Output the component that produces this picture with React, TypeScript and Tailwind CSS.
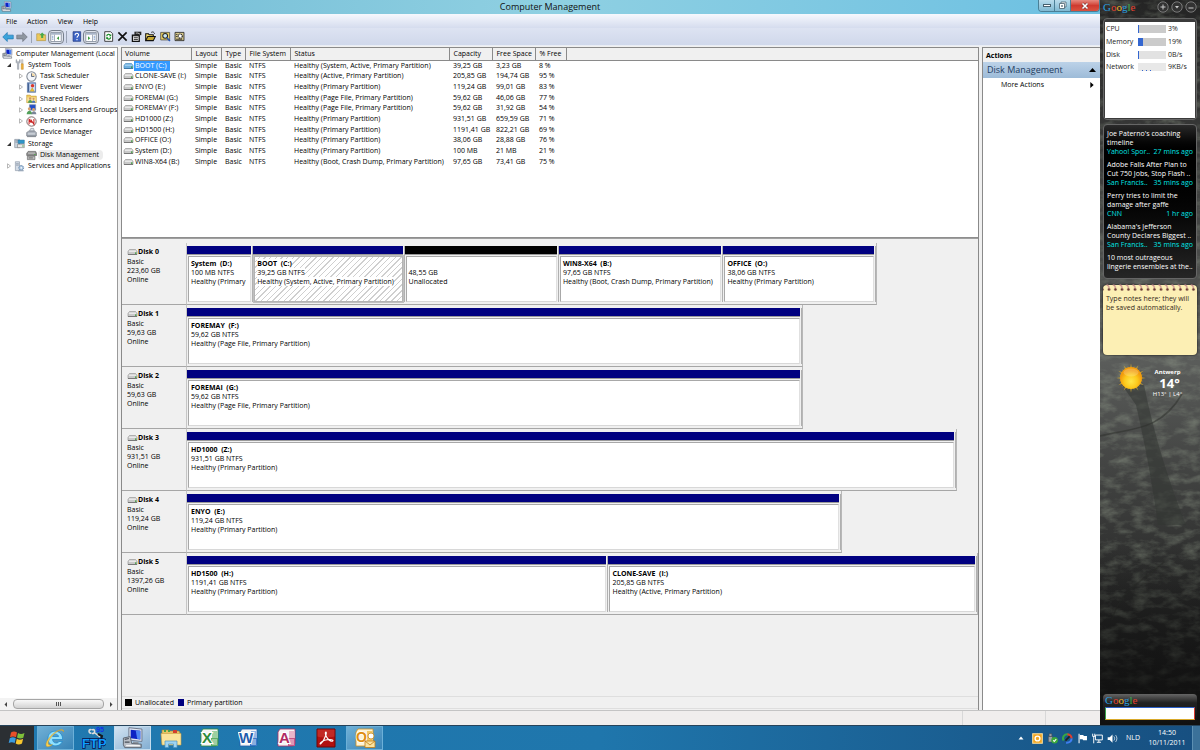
import { useState } from "react";
import type { ReactNode } from "react";

interface Volume {
  name: string;
  fs: string;
  status: string;
  capacity: string;
  free: string;
  pct: string;
}

interface Partition {
  title?: string;
  size: string;
  status: string;
  weight: number;
  unallocated?: boolean;
  selected?: boolean;
}

interface Disk {
  name: string;
  size: string;
  width: number;
  parts: Partition[];
}

const volumes: Volume[] = [
  { name: "BOOT (C:)", fs: "NTFS", status: "Healthy (System, Active, Primary Partition)", capacity: "39,25 GB", free: "3,23 GB", pct: "8 %" },
  { name: "CLONE-SAVE (I:)", fs: "NTFS", status: "Healthy (Active, Primary Partition)", capacity: "205,85 GB", free: "194,74 GB", pct: "95 %" },
  { name: "ENYO (E:)", fs: "NTFS", status: "Healthy (Primary Partition)", capacity: "119,24 GB", free: "99,01 GB", pct: "83 %" },
  { name: "FOREMAI (G:)", fs: "NTFS", status: "Healthy (Page File, Primary Partition)", capacity: "59,62 GB", free: "46,06 GB", pct: "77 %" },
  { name: "FOREMAY (F:)", fs: "NTFS", status: "Healthy (Page File, Primary Partition)", capacity: "59,62 GB", free: "31,92 GB", pct: "54 %" },
  { name: "HD1000 (Z:)", fs: "NTFS", status: "Healthy (Primary Partition)", capacity: "931,51 GB", free: "659,59 GB", pct: "71 %" },
  { name: "HD1500 (H:)", fs: "NTFS", status: "Healthy (Primary Partition)", capacity: "1191,41 GB", free: "822,21 GB", pct: "69 %" },
  { name: "OFFICE (O:)", fs: "NTFS", status: "Healthy (Primary Partition)", capacity: "38,06 GB", free: "28,88 GB", pct: "76 %" },
  { name: "System (D:)", fs: "NTFS", status: "Healthy (Primary Partition)", capacity: "100 MB", free: "21 MB", pct: "21 %" },
  { name: "WIN8-X64 (B:)", fs: "NTFS", status: "Healthy (Boot, Crash Dump, Primary Partition)", capacity: "97,65 GB", free: "73,41 GB", pct: "75 %" },
];

const disks: Disk[] = [
  {
    name: "Disk 0",
    size: "223,60 GB",
    width: 87.2,
    parts: [
      { title: "System  (D:)", size: "100 MB NTFS", status: "Healthy (Primary", weight: 65 },
      { title: "BOOT  (C:)", size: "39,25 GB NTFS", status: "Healthy (System, Active, Primary Partition)", weight: 150, selected: true },
      { size: "48,55 GB", status: "Unallocated", weight: 153, unallocated: true },
      { title: "WIN8-X64  (B:)", size: "97,65 GB NTFS", status: "Healthy (Boot, Crash Dump, Primary Partition)", weight: 163 },
      { title: "OFFICE  (O:)", size: "38,06 GB NTFS", status: "Healthy (Primary Partition)", weight: 151 },
    ],
  },
  { name: "Disk 1", size: "59,63 GB", width: 77.9, parts: [{ title: "FOREMAY  (F:)", size: "59,62 GB NTFS", status: "Healthy (Page File, Primary Partition)", weight: 1 }] },
  { name: "Disk 2", size: "59,63 GB", width: 77.9, parts: [{ title: "FOREMAI  (G:)", size: "59,62 GB NTFS", status: "Healthy (Page File, Primary Partition)", weight: 1 }] },
  { name: "Disk 3", size: "931,51 GB", width: 97.3, parts: [{ title: "HD1000  (Z:)", size: "931,51 GB NTFS", status: "Healthy (Primary Partition)", weight: 1 }] },
  { name: "Disk 4", size: "119,24 GB", width: 82.8, parts: [{ title: "ENYO  (E:)", size: "119,24 GB NTFS", status: "Healthy (Primary Partition)", weight: 1 }] },
  {
    name: "Disk 5",
    size: "1397,26 GB",
    width: 100,
    parts: [
      { title: "HD1500  (H:)", size: "1191,41 GB NTFS", status: "Healthy (Primary Partition)", weight: 421 },
      { title: "CLONE-SAVE  (I:)", size: "205,85 GB NTFS", status: "Healthy (Active, Primary Partition)", weight: 368 },
    ],
  },
];

const news = [
  { text: ["Joe Paterno's coaching", "timeline"], source: "Yahoo! Spor..", age: "27 mins ago" },
  { text: ["Adobe Falls After Plan to", "Cut 750 Jobs, Stop Flash .."], source: "San Francis..", age: "35 mins ago" },
  { text: ["Perry tries to limit the", "damage after gaffe"], source: "CNN", age: "1 hr ago" },
  { text: ["Alabama's Jefferson", "County Declares Biggest .."], source: "San Francis..", age: "35 mins ago" },
  { text: ["10 most outrageous", "lingerie ensembles at the.."], source: "", age: "" },
];

/* ---------- icons ---------- */

const Svg = ({ size = 11, box = 16, children }: { size?: number; box?: number; children: ReactNode }) => (
  <svg width={size} height={size} viewBox={`0 0 ${box} ${box}`} fill="none" className="shrink-0" aria-hidden="true">
    {children}
  </svg>
);

const ComputerIcon = ({ size = 11 }: { size?: number }) => (
  <Svg size={size}>
    <path d="M5 .5l9.500 1v9L5 9.500z" fill="#dfe5ef" stroke="#6c778b" strokeWidth=".7" />
    <path d="M6.300 2l7 .8v6.200l-7-.8z" fill="#0d23c4" />
    <path d="M10 2.500l3.300.3v6.100L11 8.600z" fill="#4f86f2" />
    <path d="M8 10.500l4 .4v1.500H8z" fill="#8d949e" />
    <path d="M1 8l5-1 1 5 7 .5V15H2l-1-2z" fill="#b9bec6" stroke="#5d6570" strokeWidth=".7" />
    <path d="M2 9l3-.6M2 11h3.500" stroke="#49505b" strokeWidth=".8" />
    <path d="M3 13.500h10" stroke="#f4f4f4" />
  </Svg>
);

const DriveIcon = ({ selected = false }: { selected?: boolean }) => (
  <svg width="11" height="8" viewBox="0 0 11 8" className="shrink-0" aria-hidden="true">
    <path d="M2.500 1.500h6L10 3.500v3H1v-3z" fill={selected ? "#6fb0de" : "#c9c9c9"} stroke={selected ? "#4d8fc2" : "#999"} strokeWidth=".7" />
    <path d="M2 3.200h7" stroke={selected ? "#a9d5f3" : "#f1f1f1"} strokeWidth="1.200" />
    <path d="M1 6.500h9" stroke={selected ? "#336e9e" : "#6a6a6a"} strokeWidth=".8" />
    <path d="M8 4.500h1.500v1.300H8z" fill="#2f9a2c" />
  </svg>
);

const ToolsIcon = () => (
  <Svg>
    <path d="M3 1v4l2 2v8h2V7l2-2V1H8v3H4V1z" fill="#b6bcc4" stroke="#7a828c" strokeWidth=".6" />
    <path d="M11 1h2v6h-2z" fill="#d7d7d7" stroke="#888" strokeWidth=".5" />
    <path d="M10.500 7h3v8h-3z" fill="#f0b23c" stroke="#b37a19" strokeWidth=".6" />
  </Svg>
);
const ClockIcon = () => (
  <Svg>
    <circle cx="8" cy="8" r="6.800" fill="#f3f6fb" stroke="#7f8792" strokeWidth="1.500" />
    <path d="M8 8V2.800A5.200 5.200 0 0 1 13.200 8z" fill="#f1d9a8" />
    <path d="M8 3.500V8h4" stroke="#4a5a78" strokeWidth="1.200" />
  </Svg>
);
const EventIcon = () => (
  <Svg>
    <path d="M2 1h12v14H2z" fill="#7696c8" stroke="#405f93" strokeWidth=".8" />
    <path d="M5 2.500h8v11H5z" fill="#d5e0f3" />
    <circle cx="9.500" cy="5.500" r="2.500" fill="#d9382d" />
    <path d="M6 13.500l3-5 3 5z" fill="#f4c42e" stroke="#a87d0c" strokeWidth=".5" />
    <path d="M3.500 2v12" stroke="#294474" />
  </Svg>
);
const SharedIcon = () => (
  <Svg>
    <path d="M1 3h5l1.500 1.500H15V14H1z" fill="#f1cc61" stroke="#b58d27" strokeWidth=".7" />
    <path d="M2 6.500h12V13H2z" fill="#f9e39b" />
    <circle cx="6" cy="8" r="1.800" fill="#d09565" />
    <path d="M3 14c0-5 6-5 6 0z" fill="#4f9b52" />
    <circle cx="11" cy="8.500" r="1.600" fill="#d09565" />
    <path d="M8.500 14c0-4 5-4 5 0z" fill="#4673bd" />
  </Svg>
);
const UsersIcon = () => (
  <Svg>
    <path d="M5 1h9v8H5z" fill="#234fc9" stroke="#8290a8" />
    <circle cx="5" cy="7" r="2.300" fill="#d8a06e" />
    <path d="M1 15c0-7 8-7 8 0z" fill="#52a05a" />
    <circle cx="11" cy="8" r="2.100" fill="#d8a06e" />
    <path d="M8 15c0-6 7-6 7 0z" fill="#7a8597" />
  </Svg>
);
const PerfIcon = () => (
  <Svg>
    <circle cx="8" cy="8" r="6.800" fill="#fff" stroke="#6f5a5a" strokeWidth="1.300" />
    <path d="M4.500 12V4.500l3 5.500V6l4 6V4.500" stroke="#c81f1f" strokeWidth="1.500" />
  </Svg>
);
const DeviceIcon = () => (
  <Svg>
    <path d="M5 6l2-4h4l1 4z" fill="#dfe4ea" stroke="#77808c" strokeWidth=".8" />
    <path d="M1 8l3-2h9l2 2v5H1z" fill="#aeb5bf" stroke="#5b636e" strokeWidth=".8" />
    <path d="M3 10h10" stroke="#eef0f3" />
    <path d="M1.500 14h13" stroke="#555c66" />
  </Svg>
);
const StorageIcon = () => (
  <Svg>
    <path d="M1 2h7v12H1z" fill="#cdd6df" stroke="#6e7a88" strokeWidth=".8" />
    <path d="M2 4h5M2 6h5" stroke="#6f7e90" />
    <path d="M6 3h9v5H6z" fill="#2f96c9" stroke="#1d6b96" strokeWidth=".7" />
    <path d="M5 9h10v5H5z" fill="#e7e7e7" stroke="#727272" strokeWidth=".8" />
    <path d="M12 11.500h2" stroke="#36a436" strokeWidth="1.500" />
  </Svg>
);
const DiskMgmtIcon = () => (
  <Svg>
    <path d="M3 2h11l1.500 3v3H1V5z" fill="#8d8d8d" stroke="#4d4d4d" strokeWidth=".8" />
    <path d="M3 4.500h10" stroke="#e9e9e9" />
    <path d="M2 9h11v5H2z" fill="#b9b9b9" stroke="#555" strokeWidth=".8" />
    <path d="M4 11.500h6" stroke="#505050" />
    <path d="M12 6.500h2" stroke="#3faa3a" strokeWidth="1.200" />
  </Svg>
);
const ServicesIcon = () => (
  <Svg>
    <path d="M2 1h6v13H2z" fill="#d4dce6" stroke="#7d8a9a" strokeWidth=".8" />
    <path d="M3 4h4M3 6h4" stroke="#7d8a9a" />
    <circle cx="10.500" cy="10" r="3.500" fill="#a9c3de" stroke="#5e7fa4" strokeWidth="1.400" strokeDasharray="1.500 1" />
    <circle cx="10.500" cy="10" r="1.200" fill="#fff" />
    <path d="M6 13h8v2H6z" fill="#9aa9ba" />
  </Svg>
);

/* ---------- console tree ---------- */

interface TreeNode {
  label: string;
  level: 0 | 1 | 2;
  icon: ReactNode;
  arrow?: "open" | "closed";
}

const tree: TreeNode[] = [
  { label: "Computer Management (Local", level: 0, icon: <ComputerIcon /> },
  { label: "System Tools", level: 1, icon: <ToolsIcon />, arrow: "open" },
  { label: "Task Scheduler", level: 2, icon: <ClockIcon />, arrow: "closed" },
  { label: "Event Viewer", level: 2, icon: <EventIcon />, arrow: "closed" },
  { label: "Shared Folders", level: 2, icon: <SharedIcon />, arrow: "closed" },
  { label: "Local Users and Groups", level: 2, icon: <UsersIcon />, arrow: "closed" },
  { label: "Performance", level: 2, icon: <PerfIcon />, arrow: "closed" },
  { label: "Device Manager", level: 2, icon: <DeviceIcon /> },
  { label: "Storage", level: 1, icon: <StorageIcon />, arrow: "open" },
  { label: "Disk Management", level: 2, icon: <DiskMgmtIcon /> },
  { label: "Services and Applications", level: 1, icon: <ServicesIcon />, arrow: "closed" },
];

const indents = ["pl-[2px]", "pl-1", "pl-4"];

const Tree = () => {
  const [selected, setSelected] = useState("Disk Management");

  return (
    <nav aria-label="Console tree" className="flex h-[124px] flex-col">
      {tree.map((node) => (
        <button
          key={node.label}
          onClick={() => setSelected(node.label)}
          className={`flex w-full flex-1 items-center overflow-hidden text-left ${indents[node.level]}`}
        >
          {node.level > 0 && (
            <span className="flex w-[10px] shrink-0 justify-start pl-[2px]">
              {node.arrow === "open" && (
                <svg width="6" height="6" viewBox="0 0 6 6" aria-hidden="true">
                  <path d="M5 1v4H1z" fill="#333" />
                </svg>
              )}
              {node.arrow === "closed" && (
                <svg width="6" height="6" viewBox="0 0 6 6" aria-hidden="true">
                  <path d="M1.500.8L4.500 3 1.500 5.200z" fill="#fff" stroke="#999" strokeWidth=".7" />
                </svg>
              )}
            </span>
          )}
          {node.icon}
          <span
            className={`ml-px whitespace-nowrap rounded-sm pl-[2px] ${
              selected === node.label && node.level > 0 ? "bg-[#ececec] pr-1" : ""
            }`}
          >
            {node.label}
          </span>
        </button>
      ))}
    </nav>
  );
};

/* ---------- window chrome ---------- */

const TitleBar = () => (
  <header className="flex h-[14px] items-start bg-linear-to-r from-[#6fb9d3] via-[#8fd0e2] to-[#6cc0e2]">
    <div className="flex w-[62px] pt-px pl-px">
      <ComputerIcon />
    </div>
    <h1 className="flex-1 text-center text-[9px] leading-[14px] text-[#111]">Computer Management</h1>
    <div className="flex h-3 overflow-hidden rounded-b-sm border border-t-0 border-[#4a7f96]">
      <button aria-label="Minimize" className="flex w-4 items-center justify-center border-r border-[#4a7f96] bg-linear-to-b from-[#b9dcec] to-[#7fb9d2]">
        <span className="h-[3px] w-2 border border-[#46606e] bg-white" />
      </button>
      <button aria-label="Restore" className="flex w-4 items-center justify-center border-r border-[#4a7f96] bg-linear-to-b from-[#b9dcec] to-[#7fb9d2]">
        <Svg size={9} box={9}>
          <path d="M3 1h5v5H3z" fill="#fff" stroke="#46606e" strokeWidth=".8" />
          <path d="M1.500 2.500h5v5h-5z" fill="#fff" stroke="#46606e" strokeWidth=".8" />
          <path d="M3.200 4.200h1.600v1.600H3.200z" fill="#46606e" />
        </Svg>
      </button>
      <button aria-label="Close" className="flex w-7 items-center justify-center bg-linear-to-b from-[#e58a80] via-[#cf3a30] to-[#d9523f]">
        <Svg size={8} box={8}>
          <path d="M1.500 1.500l5 5M6.500 1.500l-5 5" stroke="#703030" strokeWidth="2.600" />
          <path d="M1.500 1.500l5 5M6.500 1.500l-5 5" stroke="#fff" strokeWidth="1.600" />
        </Svg>
      </button>
    </div>
  </header>
);

const MenuBar = () => (
  <div className="flex h-[14px] items-center bg-linear-to-b from-[#f6f8fd] to-[#d5dcee] pt-px pl-px">
    {["File", "Action", "View", "Help"].map((item) => (
      <button key={item} className="px-[5px]">
        {item}
      </button>
    ))}
  </div>
);

const Separator = () => <span className="h-3 w-px bg-[#9aa3b5]" />;

const ToolButton = ({ label, pressed, children }: { label: string; pressed?: boolean; children: ReactNode }) => (
  <button
    aria-label={label}
    className={`flex h-[14px] items-center justify-center ${
      pressed ? "w-4 rounded-sm border border-[#777f8c] bg-[#dfe3ec]" : "w-[14px]"
    }`}
  >
    {children}
  </button>
);

const PaneIcon = ({ flip = false }: { flip?: boolean }) => (
  <Svg size={12}>
    <path d="M1 2h14v12H1z" fill="#fff" stroke="#7a8391" />
    <path d="M1.500 2.500h13v2.500h-13z" fill="#a9b5c8" />
    <path d={flip ? "M10 5v9" : "M6 5v9"} stroke="#8a94a5" />
    <path d={flip ? "M4 7l3 2.500L4 12z" : "M12 7L9 9.500l3 2.500z"} fill="#3b9a3f" />
    <path d={flip ? "M11.500 7h2M11.500 9h2M11.500 11h2" : "M2.500 7h2M2.500 9h2M2.500 11h2"} stroke="#5b82bd" />
  </Svg>
);

const Toolbar = () => (
  <div className="flex h-[18px] items-center border-b border-[#e9edf5] bg-linear-to-b from-[#dde3f2] to-[#d0d8eb] pl-px">
    <ToolButton label="Back">
      <Svg size={12}>
        <path d="M1 8l6-6v3.500h8v5H7V14z" fill="#3ba4dc" stroke="#1f76b0" strokeWidth=".9" />
      </Svg>
    </ToolButton>
    <ToolButton label="Forward">
      <Svg size={12}>
        <path d="M15 8L9 2v3.500H1v5h8V14z" fill="#8e96a0" stroke="#6b737d" strokeWidth=".9" />
      </Svg>
    </ToolButton>
    <span className="flex w-[5px] justify-center"><Separator /></span>
    <ToolButton label="Up one level">
      <Svg>
        <path d="M1 4h5l1.500 1.500H14V14H1z" fill="#ecc85c" stroke="#a98b39" strokeWidth=".8" />
        <path d="M9 2l4 4h-2.500v4h-3V6H5z" fill="#47a94a" />
      </Svg>
    </ToolButton>
    <ToolButton label="Show or hide console tree" pressed><PaneIcon /></ToolButton>
    <span className="flex w-[5px] justify-center"><Separator /></span>
    <ToolButton label="Help">
      <Svg>
        <path d="M3 1h11v14H3z" fill="#3c63c4" stroke="#20377f" />
        <path d="M6 6c0-4 5.500-3 5-.2-.3 1.600-2.300 1.700-2.300 4M8.700 11.500v1.800" stroke="#fff" strokeWidth="1.600" />
      </Svg>
    </ToolButton>
    <ToolButton label="Show or hide action pane" pressed><PaneIcon flip /></ToolButton>
    <span className="w-[2px]" />
    <ToolButton label="Refresh">
      <Svg>
        <path d="M2.500 1H11l3 3v11H2.500z" fill="#fff" stroke="#222" strokeWidth="1.200" />
        <path d="M5.500 7.500c0-3.500 4.500-3.500 5-1M11 9c0 3.500-4.500 3.500-5 1" stroke="#148a25" strokeWidth="1.800" />
        <path d="M8.500 7.500H12V4.500zM8 9H4.500v3z" fill="#148a25" />
      </Svg>
    </ToolButton>
    <ToolButton label="Delete">
      <Svg>
        <path d="M2 2l12 12M14 2L2 14" stroke="#111" strokeWidth="2.400" />
      </Svg>
    </ToolButton>
    <ToolButton label="Properties">
      <Svg>
        <path d="M2 6h10v9H2z" fill="#eee" stroke="#111" strokeWidth="1.800" />
        <path d="M2 7h10M4 9.800h6M4 12.300h6" stroke="#111" strokeWidth="1.200" />
        <path d="M5 1h10v5H5z" fill="#222" />
        <path d="M7 3h3l3 1.500" stroke="#fff" />
      </Svg>
    </ToolButton>
    <ToolButton label="Open">
      <Svg>
        <path d="M1 14V4h4l1 1.500h6V8" fill="#f2dc73" stroke="#111" strokeWidth="1.500" />
        <path d="M1 14l3-6h11l-3 6z" fill="#c5a730" stroke="#111" strokeWidth="1.500" />
        <path d="M9 2c3-1.500 4 0 5 2" stroke="#111" strokeWidth="1.200" />
      </Svg>
    </ToolButton>
    <span className="w-px" />
    <ToolButton label="Explore">
      <Svg>
        <path d="M1 2h13v11H1z" fill="#e9d064" stroke="#333" />
        <circle cx="7.500" cy="7" r="3.500" fill="#c8e8f8" stroke="#222" strokeWidth="1.500" />
        <path d="M10 10l4.500 4.500" stroke="#2a57b5" strokeWidth="2.200" />
      </Svg>
    </ToolButton>
    <ToolButton label="Settings">
      <Svg>
        <path d="M1.500 2h13v12h-13z" fill="#d9cb8e" stroke="#222" strokeWidth="1.200" />
        <circle cx="9" cy="7.500" r="3" fill="#fff" stroke="#222" strokeWidth="1.800" strokeDasharray="1.500 .8" />
        <path d="M3 5h2M3 8h2M3 12h9" stroke="#222" strokeWidth="1.200" />
      </Svg>
    </ToolButton>
  </div>
);

/* ---------- volume list ---------- */

const columns = [
  { title: "Volume", width: "w-[69px]" },
  { title: "Layout", width: "w-[30px]" },
  { title: "Type", width: "w-6" },
  { title: "File System", width: "w-[45px]" },
  { title: "Status", width: "w-[159px]" },
  { title: "Capacity", width: "w-[43px]" },
  { title: "Free Space", width: "w-[43px]" },
  { title: "% Free", width: "w-[31px]" },
];

const VolumeList = () => {
  const [selected, setSelected] = useState(0);

  return (
    <section aria-label="Volumes" className="h-[190px] shrink-0 overflow-hidden border-b border-[#8e8e8e] bg-white">
      <table className="h-[119px] w-full table-fixed border-collapse whitespace-nowrap text-left">
        <thead>
          <tr className="h-3 bg-[#f0f0f0]">
            {columns.map((c) => (
              <th key={c.title} className={`${c.width} border-r border-b border-[#8a8a8a] p-0 pl-1 font-normal leading-[10px] first:pl-[3px]`}>
                {c.title}
              </th>
            ))}
            <td className="border-b border-[#8a8a8a]" />
          </tr>
        </thead>
        <tbody>
          {volumes.map((v, i) => (
            <tr key={v.name} onClick={() => setSelected(i)}>
              <td className="p-0 pl-px">
                <div className="flex items-center">
                  <DriveIcon selected={i === selected} />
                  <span className={i === selected ? "bg-[#3399ff] pr-1 pl-px text-white" : "pl-px"}>{v.name}</span>
                </div>
              </td>
              <td className="p-0 pl-1">Simple</td>
              <td className="p-0 pl-1">Basic</td>
              <td className="p-0 pl-1">{v.fs}</td>
              <td className="p-0 pl-1">{v.status}</td>
              <td className="p-0 pl-1">{v.capacity}</td>
              <td className="p-0 pl-1">{v.free}</td>
              <td className="p-0 pl-1">{v.pct}</td>
              <td />
            </tr>
          ))}
        </tbody>
      </table>
    </section>
  );
};

/* ---------- graphical view ---------- */

const PartitionBox = ({ part }: { part: Partition }) => (
  <div
    className="flex min-w-0 basis-0 flex-col border-r border-[#b0b0b0]"
    style={{ flexGrow: part.weight }}
  >
    <div className={`mr-px h-[9px] border-b border-[#9a9a9a] ${part.unallocated ? "bg-black" : "bg-[#000080]"}`} />
    <div
      className={`mx-px mt-px flex-1 overflow-hidden whitespace-pre border px-[2px] pt-[2px] leading-[9px] ${
        part.selected
          ? "border-[#b4b4b4] bg-[repeating-linear-gradient(135deg,#fff_0px,#fff_3px,#cfcfcf_3px,#cfcfcf_4px)] outline outline-[#c0c0c0]"
          : "border-t-[#a8a8a8] border-r-[#e0e0e0] border-b-[#d8d8d8] border-l-[#a8a8a8] bg-white"
      }`}
    >
      <p className="font-bold">
        <span className={part.selected ? "bg-white" : ""}>{part.title ?? " "}</span>
      </p>
      <p><span className={part.selected ? "bg-white" : ""}>{part.size}</span></p>
      <p><span className={part.selected ? "bg-white" : ""}>{part.status}</span></p>
    </div>
  </div>
);

const DiskRow = ({ disk }: { disk: Disk }) => (
  <div className="flex h-[62px]">
    <div className="w-[65px] shrink-0 border-r border-b border-r-[#c6c6c6] border-b-[#a6a6a6] pt-1 pl-[5px] leading-[9px]">
      <p className="flex items-center font-bold leading-[10px]">
        <DriveIcon />
        <span>{disk.name}</span>
      </p>
      <p>Basic</p>
      <p>{disk.size}</p>
      <p>Online</p>
    </div>
    <div className="min-w-0 flex-1">
      <div
        className="flex h-[62px] border-r border-b border-r-[#b8b8b8] border-b-[#a6a6a6] pt-[3px] pb-[2px]"
        style={{ width: `${disk.width}%` }}
      >
        {disk.parts.map((p) => (
          <PartitionBox key={p.status + p.size} part={p} />
        ))}
      </div>
    </div>
  </div>
);

const GraphView = () => (
  <section aria-label="Disks" className="flex flex-1 flex-col border-t border-[#9f9f9f] bg-[#f0f0f0] pt-1">
    {disks.map((d) => (
      <DiskRow key={d.name} disk={d} />
    ))}
    <footer className="mt-auto mb-px flex h-[13px] items-center border-y border-[#dedede] pl-[3px]">
      <span className="h-[7px] w-[7px] bg-black" />
      <span className="mr-1 ml-[3px]">Unallocated</span>
      <span className="h-[7px] w-[6px] bg-[#000080]" />
      <span className="ml-[3px]">Primary partition</span>
    </footer>
  </section>
);

const ActionsPane = () => (
  <aside className="flex w-[118px] shrink-0 flex-col border-t border-l border-[#8a8a8a] bg-white">
    <h2 className="h-[14px] bg-[#f1f1f1] pl-[3px] font-bold leading-[15px]">Actions</h2>
    <button className="flex h-4 items-center justify-between bg-linear-to-b from-[#bcd2e8] to-[#9dbbd8] px-1 text-[9px] text-[#1e3c60]">
      Disk Management
      <svg width="7" height="4" viewBox="0 0 7 4" aria-hidden="true"><path d="M3.500 0L7 4H0z" fill="#000" /></svg>
    </button>
    <button className="flex h-[14px] items-center justify-between pr-[6px] pl-[18px]">
      More Actions
      <svg width="4" height="6" viewBox="0 0 4 7" aria-hidden="true"><path d="M0 0l4 3.500L0 7z" fill="#000" /></svg>
    </button>
  </aside>
);

/* ---------- gadgets ---------- */

const GoogleLogo = () => (
  <span className="font-[Liberation_Serif,serif] text-[11px] leading-[12px]">
    <span className="text-[#2a9fe0]">G</span>
    <span className="text-[#e8402f]">o</span>
    <span className="text-[#e9b92b]">o</span>
    <span className="text-[#2a9fe0]">g</span>
    <span className="text-[#3bb24a]">l</span>
    <span className="text-[#e8402f]">e</span>
  </span>
);

const meters = [
  { label: "CPU", value: "3%", bar: 3, bg: "bg-[#cbcbcb]" },
  { label: "Memory", value: "19%", bar: 18, bg: "bg-[#cbcbcb]" },
  { label: "Disk", value: "0B/s", bar: 5, bg: "bg-[#e2e2e2]" },
  { label: "Network", value: "9KB/s", bar: 0, bg: "bg-[#e8e8e8]" },
];

// Misty forest behind the gadgets
const Wallpaper = () => (
  <svg className="absolute inset-0 h-full w-full" viewBox="0 0 100 725" preserveAspectRatio="none" aria-hidden="true">
    <defs>
      <filter id="leaves" x="0" y="0" width="100%" height="100%">
        <feTurbulence type="fractalNoise" baseFrequency=".06 .12" numOctaves="4" seed="8" />
        <feColorMatrix values="0 0 0 0 .36  0 0 0 0 .42  0 0 0 0 .32  1.800 0 0 0 -.75" />
      </filter>
      <linearGradient id="fade" x1="0" y1="0" x2="0" y2="1">
        <stop offset="0" stopColor="#111" stopOpacity="0" />
        <stop offset="1" stopColor="#111" />
      </linearGradient>
    </defs>
    <rect width="100" height="725" filter="url(#leaves)" opacity=".45" />
    <path d="M22 385l22 0c8 40 22 90 42 140H58C52 480 44 440 36 405z" fill="#333633" opacity=".55" />
    <path d="M0 436c30-8 60-4 82-42M12 620c8-30 30-38 52-58" stroke="#2b2e2a" strokeWidth="1.500" fill="none" opacity=".5" />
    <rect y="540" width="100" height="185" fill="url(#fade)" />
  </svg>
);

const sunRays = Array.from({ length: 24 }, (_, i) => i * 15);

const Gadgets = () => (
  <aside className="relative w-[100px] shrink-0 bg-linear-to-b from-[#242424] via-[#5a5c5a] via-50% to-[#101010] text-white">
    <Wallpaper />
    <div className="relative flex h-full flex-col px-[3px]">
      <div className="flex h-[18px] items-start pt-px">
        <GoogleLogo />
        <div className="ml-auto flex gap-[2px]">
          {["Add gadgets", "Menu", "Minimize sidebar"].map((label, i) => (
            <button key={label} aria-label={label}>
              <Svg size={12} box={12}>
                <circle cx="6" cy="6" r="5.200" fill="#333" stroke="#8d8d8d" strokeWidth=".8" />
                {i === 0 && <path d="M6 3.500v5M3.500 6h5" stroke="#ccc" />}
                {i === 1 && <path d="M4 5h4L6 7.500z" fill="#ccc" />}
                {i === 2 && <path d="M3.500 7h5" stroke="#ccc" />}
              </Svg>
            </button>
          ))}
        </div>
      </div>

      <section aria-label="System monitor" className="h-[102px] rounded-sm border border-[#666] bg-[#3b3b3b] px-px pt-[3px] pb-px text-[#222]">
        <ul className="flex h-full flex-col bg-white pt-px">
          {meters.map((m) => (
            <li key={m.label} className="flex h-[12px] items-center pl-px not-last:mb-px last:-mt-px">
              <span className="w-8">{m.label}</span>
              <span className={`flex h-2 w-7 items-end ${m.bg}`}>
                {m.bar > 0 ? (
                  <span className="h-full bg-[#3366d0]" style={{ width: `${m.bar}%` }} />
                ) : (
                  <span className="flex w-full gap-[3px] pl-1">
                    <span className="h-px w-px bg-[#3366d0]" />
                    <span className="h-px w-px bg-[#3366d0]" />
                    <span className="h-px w-px bg-[#3366d0]" />
                  </span>
                )}
              </span>
              <span className="pl-[2px]">{m.value}</span>
            </li>
          ))}
        </ul>
      </section>

      <section aria-label="News" className="mt-1 flex h-[155px] flex-col gap-1 rounded-sm border border-[#666] bg-linear-to-b from-[#2a2a2a] via-black via-20% to-[#262626] px-[3px] pt-1 leading-[9px]">
        {news.map((n) => (
          <a key={n.text[0]} href="#news" className="block whitespace-nowrap">
            <p>{n.text[0]}</p>
            <p>{n.text[1]}</p>
            {n.source && (
              <p className="flex justify-between text-[#00e5e5]">
                <span>{n.source}</span>
                <span>{n.age}</span>
              </p>
            )}
          </a>
        ))}
      </section>

      <section aria-label="Notes" className="relative mt-[6px] flex h-[70px] rounded-sm bg-[#fcefb4] shadow-[0_0_2px_#000]">
        <svg width="100%" height="8" className="absolute -top-px left-0" aria-hidden="true">
          <defs>
            <pattern id="rings" width="6.500" height="8" patternUnits="userSpaceOnUse" x="2">
              <path d="M1.500 1c2 0 2.500 1.500 2.500 4" stroke="#c98f8f" strokeWidth="1.400" fill="none" />
              <circle cx="4" cy="5.500" r="1.300" fill="#6b3b35" />
            </pattern>
          </defs>
          <rect width="100%" height="8" fill="url(#rings)" />
        </svg>
        <textarea
          aria-label="Note"
          defaultValue="Type notes here; they will be saved automatically."
          className="w-full resize-none px-[3px] pt-[9px] leading-[9px] text-[#33281a] outline-none"
        />
      </section>

      <section aria-label="Weather" className="mt-2 flex h-9 pl-[13px]">
        <svg width="30" height="30" viewBox="0 0 30 30" aria-hidden="true">
          <defs>
            <radialGradient id="sun" cx=".5" cy=".65">
              <stop offset="0" stopColor="#ffe84a" />
              <stop offset=".6" stopColor="#fcc91c" />
              <stop offset="1" stopColor="#f29b0c" />
            </radialGradient>
          </defs>
          {sunRays.map((a) => (
            <path
              key={a}
              d={a % 30 ? "M14 7L15 2.500l1 4.500z" : "M13.800 7L15 .3l1.200 6.700z"}
              fill="#d3a92c"
              opacity=".8"
              transform={`rotate(${a} 15 15)`}
            />
          ))}
          <circle cx="15" cy="15" r="11" fill="url(#sun)" />
          <ellipse cx="15" cy="9.500" rx="7.500" ry="4" fill="#fff" opacity=".2" />
        </svg>
        <div className="flex flex-1 flex-col items-center pt-[5px] pr-2">
          <p className="text-[6px] font-bold leading-[8px]">Antwerp</p>
          <p className="pl-1 text-[13px] font-bold leading-[15px]">14°</p>
          <p className="text-[6px] leading-[6px]">H13° | L4°</p>
        </div>
      </section>

      <form className="mt-auto mb-[2px] rounded-sm bg-linear-to-b from-[#666] via-[#222] via-30% to-[#111] px-[2px] pb-[3px]" onSubmit={(e) => e.preventDefault()}>
        <label htmlFor="gsearch" className="block h-[13px] leading-[12px]"><GoogleLogo /></label>
        <input
          id="gsearch"
          type="text"
          className="block h-[13px] w-full border border-t-[#2b5fc7] border-r-[#d8392f] border-b-[#d9a92b] border-l-[#37a04a] bg-white px-1 text-black outline-none"
        />
      </form>
    </div>
  </aside>
);

/* ---------- taskbar ---------- */

const OfficeIcon = ({ letter, color, tint, deep }: { letter: string; color: string; tint: string; deep: string }) => (
  <Svg size={22} box={22}>
    <path d="M4 2h15v15l-2 2H2V5z" fill="#f4f4f4" stroke={color} strokeWidth=".8" />
    <path d="M13 4h5.500v10H13z" fill={tint} />
    <path d="M12 11h7v8h-7z" fill={deep} />
    <path d="M13 13h5M13 15h5M13 17h5" stroke="#fff" strokeWidth=".8" />
    <text x={letter === "W" ? 1 : 3} y="16" fontFamily="Liberation Sans, sans-serif" fontSize="15" fontWeight="bold" fill={color} stroke="#fff" strokeWidth="2" paintOrder="stroke">
      {letter}
    </text>
  </Svg>
);

const apps: { label: string; active?: boolean; focus?: boolean; icon: ReactNode }[] = [
  {
    label: "Internet Explorer",
    active: true,
    icon: (
      <Svg size={22} box={22}>
        <path d="M18.500 12.500H8.500c.5 4 5 4.500 6.500 2h3.300C16 20.800 4 20.500 4 11.500S16 1.800 18.200 9.500c.3.900.4 2 .3 3zM8.600 9.500h6c-.5-3-5.400-3-6 0z" fill="#8fe0ff" stroke="#1a86cc" strokeWidth=".7" />
        <path d="M19.500 5c1-3.500-4-3-8 0C5 9 .5 17 2.500 19.300c1.300 1 4.500-.3 6-1.800C6 18.300 3.500 18.500 4.300 15 6 10 12.500 4.300 16 3.300c2.500-.5 3 .2 3.500 1.700z" fill="#f9d250" stroke="#c98e18" strokeWidth=".4" />
      </Svg>
    ),
  },
  {
    label: "WS_FTP",
    icon: (
      <Svg size={24} box={24}>
        <path d="M9.500 4C6.500 2 6 8 9.500 7M10 4c3-2 4 4 0 3.500M13 7l5 4" stroke="#ddd" strokeWidth="1.600" />
        <path d="M16 8l4 2-1 4 4 3-2 3" stroke="#16191d" strokeWidth="2" />
        <text x="14" y="6" fontFamily="Liberation Sans, sans-serif" fontSize="7" fontWeight="bold" fill="#1230e8">95</text>
        <text x="0" y="22" fontFamily="Liberation Sans, sans-serif" fontSize="13" fontWeight="bold" fill="#0e9bff" stroke="#08124a" strokeWidth="1.600" paintOrder="stroke">FTP</text>
      </Svg>
    ),
  },
  { label: "Computer Management", active: true, focus: true, icon: <ComputerIcon size={22} /> },
  {
    label: "Windows Explorer",
    icon: (
      <Svg size={22} box={22}>
        <path d="M2 3h7l1 1h9l1 2v11H2z" fill="#e9c564" stroke="#a98434" strokeWidth=".6" />
        <path d="M4 3h2v2H4zM8 3h2v2H8z" fill="#4aa347" />
        <path d="M13 3h4v3h-4z" fill="#d33d2e" />
        <path d="M1 6.500h20V18H2z" fill="#fbe49a" stroke="#c79e43" strokeWidth=".6" />
        <path d="M5 20.500V14h12v6.500h-3.500V17h-5v3.500z" fill="#9fd4f2" stroke="#4a93c2" strokeWidth=".7" />
      </Svg>
    ),
  },
  { label: "Excel", icon: <OfficeIcon letter="X" color="#2e8b3a" tint="#9cd0a0" deep="#5fae66" /> },
  { label: "Word", icon: <OfficeIcon letter="W" color="#1f5bab" tint="#93b7e6" deep="#3c78c8" /> },
  { label: "Access", icon: <OfficeIcon letter="A" color="#b02c63" tint="#e9b5ca" deep="#c75286" /> },
  {
    label: "Adobe Reader",
    icon: (
      <Svg size={22} box={22}>
        <path d="M2 2h18v18H2z" fill="#b0100f" stroke="#6d0707" />
        <path d="M2.500 2.500h17v7c-6 1-11 2-17 0z" fill="#cf3a33" opacity=".6" />
        <path d="M11 5c-1.500 0-.5 5 3 8 2 1.500 4 1.500 4 .5 0-1.500-8-1.500-11.500 1.500-2.500 2-1.500 3 .5.500C9 13 12.500 5.500 11 5z" stroke="#fff" strokeWidth="1.100" />
      </Svg>
    ),
  },
  {
    label: "Outlook",
    active: true,
    icon: (
      <Svg size={22} box={22}>
        <path d="M4 2h15v15l-2 2H2V5z" fill="#fdf3d6" stroke="#d18f1c" strokeWidth=".8" />
        <path d="M13 4h5.500v10H13z" fill="#f3c765" />
        <text x="2" y="15" fontFamily="Liberation Sans, sans-serif" fontSize="14" fontWeight="bold" fill="#e08e10" stroke="#fff" strokeWidth="1.500" paintOrder="stroke">O</text>
        <circle cx="17" cy="9" r="3" fill="#fff" stroke="#c9891a" strokeWidth=".8" />
        <path d="M11 14h10v6.500H11z" fill="#fbe3a0" stroke="#c07c14" strokeWidth=".8" />
        <path d="M11 14l5 4 5-4" stroke="#c07c14" strokeWidth=".8" />
      </Svg>
    ),
  },
];

const Taskbar = () => (
  <footer className="flex h-[25px] shrink-0 items-stretch border-t border-[#26435a] bg-linear-to-r from-[#2079b0] via-[#1f76ac] to-[#174f80] text-white">
    <button aria-label="Start" className="flex w-[34px] items-center justify-center bg-[#2b2f33]">
      <Svg size={18} box={18}>
        <path d="M3 3.500c2-1.300 4-1.300 6 0L8 8.300c-2-1.200-4-1.200-6 0z" fill="#e8502a" />
        <path d="M10 4c2 1.200 4 1.200 6.500 0l-1.200 4.800c-2.300 1.200-4.300 1-6.300-.2z" fill="#7fc13a" />
        <path d="M1.800 9.300c2-1.300 4-1.300 6 0l-1.100 4.800c-2-1.200-4-1.200-6 0z" fill="#3a9be0" />
        <path d="M8.800 9.800c2 1.200 4 1.200 6.300 0L14 14.600c-2.300 1.200-4.300 1.200-6.300 0z" fill="#f7c62f" />
      </Svg>
    </button>
    <div className="ml-[3px] grid w-[348px] grid-cols-9">
      {apps.map((a) => (
        <button
          key={a.label}
          aria-label={a.label}
          className={`mr-[2px] flex items-center justify-center overflow-hidden ${
            a.focus
              ? "border border-[#c3dcee] bg-linear-to-br from-[#d3e3f1] to-[#82aed2]"
              : a.active
                ? "border border-[#6cb0d8] bg-linear-to-br from-[#6fb0d6] to-[#3783b6]"
                : ""
          }`}
        >
          {a.icon}
        </button>
      ))}
    </div>
    <div className="ml-auto flex items-center gap-1">
      <button aria-label="Show hidden icons" className="px-1">
        <Svg size={6} box={6}><path d="M3 1.500L5.500 4.500H.5z" fill="#fff" /></Svg>
      </button>
      <Svg>
        <path d="M1 1h14v14H1z" fill="#f2a51f" stroke="#fbe0a0" strokeWidth="1.500" />
        <circle cx="8" cy="8" r="3.500" stroke="#fff" strokeWidth="2" />
      </Svg>
      <Svg>
        <path d="M3 1h4v4H3zM2 5h6v8H2z" fill="#9aa1a8" stroke="#3e454c" strokeWidth=".7" />
        <circle cx="11" cy="10.500" r="4.800" fill="#3aa83a" />
        <path d="M9 10.500l1.500 1.700L13.500 9" stroke="#fff" strokeWidth="1.500" />
      </Svg>
      <Svg>
        <path d="M2.500 11A6 6 0 0 1 9 2" stroke="#35a845" strokeWidth="3" />
        <path d="M8 2a6 6 0 0 1 6 6" stroke="#e33d2c" strokeWidth="3" />
        <path d="M14 8c0 4-3.500 6.500-8 6" stroke="#3e7ef0" strokeWidth="3" />
        <path d="M11 5L5 11" stroke="#222" strokeWidth="2.500" />
      </Svg>
      <Svg>
        <path d="M3 1v14" stroke="#fff" strokeWidth="1.500" />
        <path d="M4 3h5l1 1.500h4.500v6H9L8 9H4z" fill="#fff" />
      </Svg>
      <Svg>
        <path d="M5 3h10v7H5zM10 10v3M7 13.500h6" stroke="#fff" strokeWidth="1.400" />
        <path d="M1 1v4h3V1M2.500 5v10" stroke="#fff" strokeWidth="1.400" />
      </Svg>
      <Svg>
        <path d="M1 6h3l4-4v12l-4-4H1z" fill="#fff" />
        <path d="M10 5c1.500 2 1.500 4 0 6M12.500 3c2.500 3 2.500 7 0 10" stroke="#fff" />
      </Svg>
      <span className="mr-[2px] ml-1">NLD</span>
      <div className="w-[42px] text-center leading-[10px]">
        <p>14:50</p>
        <p>10/11/2011</p>
      </div>
      <button aria-label="Show desktop" className="h-full w-2 border-l border-[#5c8fb2] bg-[#3b7199]" />
    </div>
  </footer>
);

export default function App() {
  return (
    <div className="flex h-screen min-h-[700px] flex-col overflow-hidden font-['Open_Sans',sans-serif] text-[7px] leading-[10px] text-black">
      <div className="flex min-h-0 flex-1">
        <div className="flex min-w-0 flex-1 flex-col bg-[#f0f0f0]">
          <TitleBar />
          <MenuBar />
          <Toolbar />
          <main className="flex flex-1 gap-[3px] pt-px">
            <div className="flex w-[118px] shrink-0 flex-col border-t border-r border-[#9a9a9a] bg-white">
              <Tree />
              <div className="mt-auto flex h-3 items-center gap-[5px] bg-[#f3f3f3] px-1">
                <svg width="4" height="5" viewBox="0 0 4 5" aria-hidden="true"><path d="M3 0v5L.5 2.500z" fill="#444" /></svg>
                <div className="flex h-[10px] flex-1 items-center justify-center gap-px rounded-sm border border-[#a5a5a5] bg-linear-to-b from-[#f8f8f8] to-[#d3d3d3]">
                  <span className="h-1 w-px bg-[#555]" />
                  <span className="h-1 w-px bg-[#555]" />
                  <span className="h-1 w-px bg-[#555]" />
                </div>
                <svg width="4" height="5" viewBox="0 0 4 5" aria-hidden="true"><path d="M1 0v5l2.500-2.500z" fill="#444" /></svg>
              </div>
            </div>
            <div className="flex min-w-0 flex-1 flex-col border-x border-t border-[#8a8a8a]">
              <VolumeList />
              <GraphView />
            </div>
            <ActionsPane />
          </main>
          <div className="flex h-[15px] justify-end border-t border-[#c4c4c4] bg-[#f0eeed]">
            <span className="w-[83px] border-l border-[#d8d8d8]" />
            <span className="w-[55px] border-l border-[#d8d8d8]" />
          </div>
        </div>
        <Gadgets />
      </div>
      <Taskbar />
    </div>
  );
}
